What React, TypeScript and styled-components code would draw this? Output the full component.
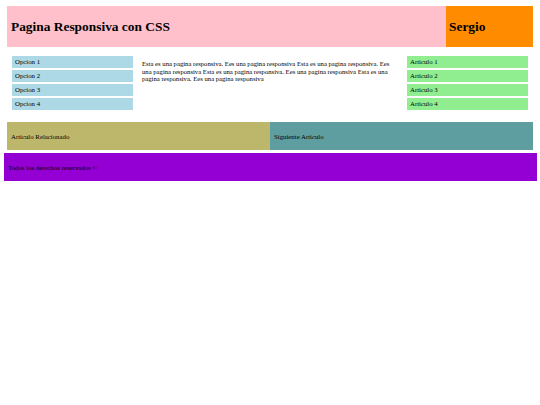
import React from 'react';
import styled, { createGlobalStyle } from 'styled-components';

const GlobalStyle = createGlobalStyle`
  html, body {
    margin: 0;
    padding: 0;
    background: #ffffff;
  }

  body {
    font-family: 'Liberation Serif', 'Times New Roman', serif;
    color: #000000;
  }
`;

const opciones = ['Opcion 1', 'Opcion 2', 'Opcion 3', 'Opcion 4'];
const articulos = ['Articulo 1', 'Articulo 2', 'Articulo 3', 'Articulo 4'];

const texto =
  'Esta es una pagina responsiva. Ees una pagina responsiva Esta es una pagina responsiva. Ees una pagina responsiva Esta es una pagina responsiva. Ees una pagina responsiva Esta es una pagina responsiva. Ees una pagina responsiva';

const App: React.FC = () => {
  return (
    <>
      <GlobalStyle />
      <PageStyled>
        <HeaderStyled>
          <TitleStyled>Pagina Responsiva con CSS</TitleStyled>
          <UserStyled>Sergio</UserStyled>
        </HeaderStyled>

        <MainStyled>
          <ListStyled>
            {opciones.map((item) => (
              <ItemStyled key={item} color="#add8e6">
                {item}
              </ItemStyled>
            ))}
          </ListStyled>
          <ContentStyled>{texto}</ContentStyled>
          <ListStyled>
            {articulos.map((item) => (
              <ItemStyled key={item} color="#90ee90">
                {item}
              </ItemStyled>
            ))}
          </ListStyled>
        </MainStyled>

        <RelatedRow>
          <RelatedBox color="#bdb76b">Articulo Relacionado</RelatedBox>
          <RelatedBox color="#5f9ea0">Siguiente Articulo</RelatedBox>
        </RelatedRow>
      </PageStyled>

      <FooterStyled>Todos los derechos reservados ©</FooterStyled>
    </>
  );
};

const PageStyled = styled.div`
  padding: 6px 7px 0 7px;
`;

const HeaderStyled = styled.header`
  display: flex;
  height: 41px;
`;

const TitleStyled = styled.h1`
  flex: 1;
  margin: 0;
  display: flex;
  align-items: center;
  padding-left: 4px;
  padding-top: 1px;
  background-color: #ffc0cb;
  font-size: 13.4px;
  font-weight: bold;
`;

const UserStyled = styled.div`
  width: 84px;
  display: flex;
  align-items: center;
  padding-left: 3px;
  padding-top: 1px;
  background-color: #ff8c00;
  font-size: 13.4px;
  font-weight: bold;
`;

const MainStyled = styled.main`
  display: grid;
  grid-template-columns: 121px 1fr 121px;
  column-gap: 9px;
  padding: 9px 5px 0 5px;
  height: 75px;
  box-sizing: border-box;
`;

const ListStyled = styled.ul`
  list-style: none;
  margin: 0;
  padding: 0;
  display: flex;
  flex-direction: column;
  gap: 2.5px;
`;

const ItemStyled = styled.li<{ color: string }>`
  height: 11.5px;
  line-height: 11.5px;
  padding-left: 3px;
  background-color: ${({ color }) => color};
  font-size: 6.8px;
`;

const ContentStyled = styled.p`
  margin: 4px 0 0 0;
  font-size: 6.67px;
  line-height: 7.7px;
`;

const RelatedRow = styled.section`
  display: grid;
  grid-template-columns: 1fr 1fr;
  height: 28px;
`;

const RelatedBox = styled.div<{ color: string }>`
  display: flex;
  align-items: center;
  padding-left: 4px;
  background-color: ${({ color }) => color};
  font-size: 6.8px;
`;

const FooterStyled = styled.footer`
  margin: 3px 3px 0 4px;
  height: 28px;
  display: flex;
  align-items: center;
  padding-left: 4px;
  background-color: #9400d3;
  font-size: 6.8px;
`;

export default App;
